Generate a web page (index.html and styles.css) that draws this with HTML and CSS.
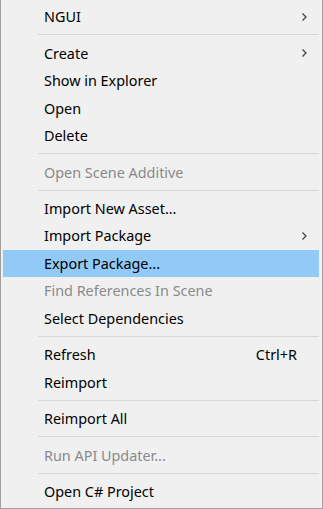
FILE: index.html
```html
<!DOCTYPE html>
<html lang="en">
<head>
    <meta charset="UTF-8">
    <meta name="viewport" content="width=device-width, initial-scale=1.0">
    <title>Context menu</title>
    <link rel="stylesheet" href="styles.css">
</head>
<body>

<ul class="menu">
    <li class="item"><span class="label">NGUI</span><svg class="arrow" width="5" height="8" viewBox="0 0 5 8"><polyline points="0.5,0.5 4,4 0.5,7.5"/></svg></li>
    <li class="sep"></li>
    <li class="item"><span class="label">Create</span><svg class="arrow" width="5" height="8" viewBox="0 0 5 8"><polyline points="0.5,0.5 4,4 0.5,7.5"/></svg></li>
    <li class="item"><span class="label">Show in Explorer</span></li>
    <li class="item"><span class="label">Open</span></li>
    <li class="item"><span class="label">Delete</span></li>
    <li class="sep"></li>
    <li class="item disabled"><span class="label">Open Scene Additive</span></li>
    <li class="sep"></li>
    <li class="item"><span class="label">Import New Asset...</span></li>
    <li class="item"><span class="label">Import Package</span><svg class="arrow" width="5" height="8" viewBox="0 0 5 8"><polyline points="0.5,0.5 4,4 0.5,7.5"/></svg></li>
    <li class="item active"><span class="label">Export Package...</span></li>
    <li class="item disabled"><span class="label">Find References In Scene</span></li>
    <li class="item"><span class="label">Select Dependencies</span></li>
    <li class="sep"></li>
    <li class="item"><span class="label">Refresh</span><span class="shortcut">Ctrl+R</span></li>
    <li class="item"><span class="label">Reimport</span></li>
    <li class="sep"></li>
    <li class="item"><span class="label">Reimport All</span></li>
    <li class="sep"></li>
    <li class="item disabled"><span class="label">Run API Updater...</span></li>
    <li class="sep"></li>
    <li class="item"><span class="label">Open C# Project</span></li>
</ul>

</body>
</html>
```

FILE: styles.css
```css
body {
    margin: 0;
    background-color: #f0f0f0;
    font-family: "Noto Sans", "Noto Sans CJK KR", sans-serif;
}
.menu {
    list-style: none;
    margin: 0;
    padding: 3px 0 0;
    width: 323px;
    height: 509px;
    box-sizing: border-box;
    background-color: #f0f0f0;
    border: 1px solid #a0a0a0;
    border-top: none;
    overflow: hidden;
}
.item {
    display: flex;
    align-items: center;
    height: 27.5px;
    margin: 0 2px;
    padding-left: 41px;
    padding-right: 13px;
    font-size: 14.4px;
    color: #000;
}
.item .label {
    flex: 1;
    white-space: nowrap;
}
.item.active {
    background-color: #91c9f7;
    margin-right: 3px;
    padding-right: 12px;
}
.item.disabled {
    color: #8a8a8a;
}
.shortcut {
    margin-right: 10px;
}
.arrow {
    display: block;
    fill: none;
    stroke: #444;
    stroke-width: 1.3;
}
.sep {
    height: 8.9px;
    margin: 0 3px 0 37px;
    display: flex;
    align-items: center;
}
.sep::before {
    content: "";
    display: block;
    width: 100%;
    height: 1px;
    background-color: #d7d7d7;
}
```
